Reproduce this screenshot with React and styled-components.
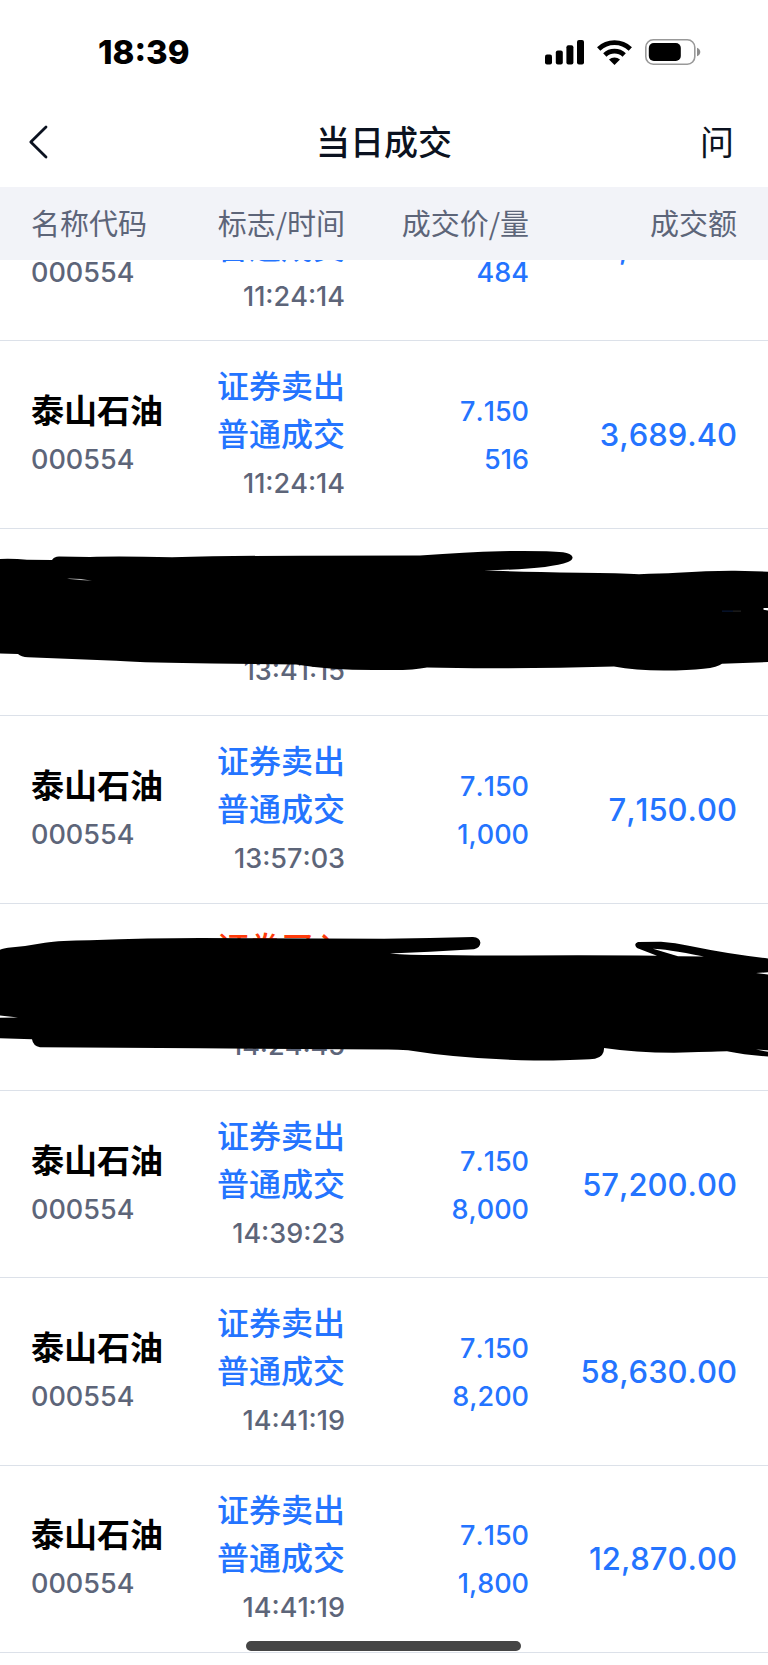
import React from 'react';
import styled, { createGlobalStyle } from 'styled-components';

const GlobalStyle = createGlobalStyle`
  *, *::before, *::after { box-sizing: border-box; }
  html, body { margin: 0; padding: 0; background: #fff; }
  body {
    font-family: Inter, "Noto Sans CJK SC", sans-serif;
    color: #000;
  }
`;

const Page = styled.div`
  min-height: 100vh;
  display: flex;
  flex-direction: column;
  padding-bottom: 12px;
`;

const Top = styled.header`
  position: relative;
  z-index: 2;
  background: #fff;
`;

const StatusBar = styled.div`
  height: 96px;
  padding: 8px 67px 0 98px;
  display: flex;
  align-items: center;
  justify-content: space-between;
`;

const Clock = styled.time`
  font-size: 33px;
  line-height: 40px;
  font-weight: 800;
`;

const StatusIcons = styled.div`
  display: flex;
  align-items: center;
  gap: 13px;
  svg { display: block; }
`;

const NavBar = styled.nav`
  height: 91px;
  padding: 2px 34px 0 24px;
  display: grid;
  grid-template-columns: 1fr auto 1fr;
  align-items: center;
  color: #0b1220;
`;

const Title = styled.h1`
  margin: 0;
  padding-left: 10px;
  font-size: 34px;
  line-height: 48px;
  font-weight: 500;
`;

const NavButton = styled.button`
  border: 0;
  padding: 0;
  background: none;
  color: inherit;
  font-family: inherit;
  font-size: 34px;
  line-height: 48px;
  display: flex;
  justify-self: ${(p) => (p.$end ? 'end' : 'start')};
`;

const Table = styled.table`
  flex: 1;
  display: flex;
  flex-direction: column;
`;

const TableHead = styled.thead`
  position: relative;
  z-index: 1;
  display: block;
  background: #f2f3f8;
  color: #5d6579;
`;

const columns = `
  display: grid;
  grid-template-columns: 157fr 157fr 184fr 208fr;
  align-items: center;
`;

const HeadRow = styled.tr`
  ${columns}
  height: 73px;
  padding: 0 31px 4px;
`;

const HeadCell = styled.th`
  padding: 0;
  font-family: "Noto Sans CJK SC", sans-serif;
  font-size: 29px;
  line-height: 40px;
  font-weight: 400;
  white-space: nowrap;
  text-align: ${(p) => (p.$left ? 'left' : 'right')};
`;

/* The list is scrolled: its first record is partly under the header. */
const TableBody = styled.tbody`
  flex: 1;
  display: grid;
  grid-auto-rows: 1fr;
  margin-top: -106px;
`;

const Row = styled.tr`
  ${columns}
  position: relative;
  min-height: 187px;
  padding: 1px 31px 0;
  border-bottom: 1px solid #dce1e9;
`;

const Cell = styled.td`
  padding: 0;
  text-align: ${(p) => (p.$left ? 'left' : 'right')};
`;

const Line = styled.span`
  display: block;
  height: 48px;
  line-height: 48px;
  white-space: nowrap;
`;

const Name = styled(Line)`
  font-size: 33px;
  font-weight: 700;
`;

const Flag = styled(Line)`
  font-size: 32px;
  font-weight: 500;
  color: ${(p) => (p.$buy ? '#ff3b0a' : '#2474ff')};
`;

const Figure = styled(Line)`
  font-size: 27px;
  line-height: 50px;
  font-weight: 500;
  font-kerning: none;
  color: ${(p) => (p.$blue ? '#2474ff' : '#5d6579')};
`;

const Amount = styled(Line)`
  font-size: 31px;
  font-weight: 500;
  font-kerning: none;
  color: #2474ff;
`;

const Scribble = styled.svg`
  position: absolute;
  inset: 0;
  width: 100%;
  height: 100%;
`;

const HomeIndicator = styled.div`
  position: fixed;
  z-index: 3;
  bottom: 14px;
  left: 50%;
  width: 275px;
  height: 10px;
  margin-left: -138px;
  border-radius: 5px;
  background: #454545;
`;

const Signal = () => (
  <svg width="39" height="25" viewBox="0 0 39 25" aria-hidden="true">
    <rect x="0" y="14.5" width="7" height="10" rx="2" />
    <rect x="10.8" y="10.5" width="7" height="14" rx="2" />
    <rect x="21.4" y="5.2" width="7" height="19.3" rx="2" />
    <rect x="32" y="0" width="7" height="24.5" rx="2" />
  </svg>
);

const Wifi = () => (
  <svg width="35" height="25" viewBox="0 0 35 25" aria-hidden="true">
    <g fill="none" stroke="#000" strokeWidth="4.8">
      <path d="M1.7 8.9 A23 23 0 0 1 33.3 8.9" />
      <path d="M7.8 15 A14.2 14.2 0 0 1 27.2 15" />
    </g>
    <path d="M17.5 25 L12 19.6 A8 8 0 0 1 23 19.6 Z" />
  </svg>
);

const Battery = () => (
  <svg width="56" height="26" viewBox="0 0 56 26" aria-hidden="true">
    <rect x="0.8" y="0.8" width="49" height="24.4" rx="7.5" fill="none" stroke="#999" strokeWidth="1.6" />
    <rect x="3.8" y="4" width="32" height="18" rx="5" />
    <path d="M52 8.8 C56.4 10.2 56.4 15.8 52 17.2 Z" fill="#8c8c8c" />
  </svg>
);

const Back = () => (
  <svg width="30" height="40" viewBox="0 0 30 40" aria-hidden="true">
    <path d="M22 4 L6.8 19 L22 34" fill="none" stroke="currentColor" strokeWidth="2.8" strokeLinecap="round" strokeLinejoin="round" />
  </svg>
);

const FirstScribble = () => (
  <Scribble viewBox="0 0 768 187" preserveAspectRatio="none" aria-hidden="true">
    <path d="M0 30 Q14 29.5 27 30.8 L52 31.2 Q54 27.5 59 27.5 L90 28 Q120 27.2 172 28.3 Q230 26.8 300 26.8 L420 26.6 Q467 23.2 500 22.3 Q545 21.6 563 23.4 Q571 24.5 572.5 28 Q573 31 568 33 Q548 40.4 484 41.5 Q520 43.2 580 43.8 Q620 44 639 45.3 Q660 44.8 677 44 Q710 41.6 735 41.8 L768 42.8 V79.3 H763.5 V81 L768 81.8 V133.5 L722 135.2 Q714 142 664 142 Q635 141.8 614 138 L560 139.2 Q480 140.5 427 139 Q413 142 384 141.5 Q335 142.3 296 136 L212 135 Q150 134.5 116 132.3 L28 128.7 Q21 128 18 125.3 L0 124.8 Z" />
    <path d="M67 49.8 Q80 49.5 92 51.8 Q80 51.5 67 49.8" fill="#b5b5b5" />
    <path d="M722 82.4 H733" stroke="#0a1c40" strokeWidth="1" />
    <path d="M733 82.4 H741" stroke="#2a2a2a" strokeWidth="1" />
  </Scribble>
);

const SecondScribble = () => (
  <Scribble viewBox="0 0 768 187" preserveAspectRatio="none" aria-hidden="true">
    <path fillRule="evenodd" d="M0 46 Q2 44.8 8 44 Q28 42 45 38.8 Q60 36.5 90 36.3 Q150 34.4 200 34.2 L384 34.8 L430 34.2 L473 33 Q480 33.5 480.4 39 Q480 44.5 474 45.3 L430 48 L390 49.7 Q400 51.3 440 51.1 Q480 51.8 520 51.7 Q600 51.2 657 52 L637 44.2 Q633 40 638 38.2 L661 38 Q675 39 690 42.2 Q730 50.5 768 54.6 V68.5 L756 69.3 L768 70.7 V146.8 L756 146 L768 148.3 V153 Q745 151.5 727 147.8 Q710 148.2 674 149.3 Q635 149 604 144.4 Q604.5 153.5 595 155.2 Q575 157 534 157 Q465 156 408 146.8 Q396 145.8 384 146 L200 144.8 L40 143.8 Q33 142.5 32 135.8 L0 134.6 V114.2 L18 113.9 L0 111.8 Z M653 44.8 Q663 44.6 704 52.6 L678 52.3 Z" />
  </Scribble>
);

const scribbles = { first: FirstScribble, second: SecondScribble };

const trades = [
  { time: '11:24:14', count: '484', amount: '3,460.60' },
  { name: '泰山石油', time: '11:24:14', flag: '证券卖出', price: '7.150', count: '516', amount: '3,689.40' },
  { time: '13:41:15', hidden: 'first' },
  { name: '泰山石油', time: '13:57:03', flag: '证券卖出', price: '7.150', count: '1,000', amount: '7,150.00' },
  { time: '14:24:45', hidden: 'second', flag: '证券买入', buy: true },
  { name: '泰山石油', time: '14:39:23', flag: '证券卖出', price: '7.150', count: '8,000', amount: '57,200.00' },
  { name: '泰山石油', time: '14:41:19', flag: '证券卖出', price: '7.150', count: '8,200', amount: '58,630.00' },
  { name: '泰山石油', time: '14:41:19', flag: '证券卖出', price: '7.150', count: '1,800', amount: '12,870.00' },
];

function Trade({ name, time, price, count, amount, hidden, flag, buy }) {
  const Cover = scribbles[hidden];
  return (
    <Row>
      <Cell $left>
        <Name>{name}</Name>
        <Figure>{!hidden && '000554'}</Figure>
      </Cell>
      <Cell>
        <Flag $buy={buy}>{flag}</Flag>
        <Flag>{!hidden && '普通成交'}</Flag>
        <Figure>{time}</Figure>
      </Cell>
      <Cell>
        <Figure $blue>{price}</Figure>
        <Figure $blue>{count}</Figure>
      </Cell>
      <Cell>
        <Amount>{amount}</Amount>
        {Cover && <Cover />}
      </Cell>
    </Row>
  );
}

export default function App() {
  return (
    <>
      <GlobalStyle />
      <Page lang="zh-CN">
        <Top>
          <StatusBar>
            <Clock>18:39</Clock>
            <StatusIcons>
              <Signal />
              <Wifi />
              <Battery />
            </StatusIcons>
          </StatusBar>
          <NavBar>
            <NavButton aria-label="返回"><Back /></NavButton>
            <Title>当日成交</Title>
            <NavButton $end>问</NavButton>
          </NavBar>
        </Top>
        <Table>
          <TableHead>
            <HeadRow>
              <HeadCell $left>名称代码</HeadCell>
              <HeadCell>标志/时间</HeadCell>
              <HeadCell>成交价/量</HeadCell>
              <HeadCell>成交额</HeadCell>
            </HeadRow>
          </TableHead>
          <TableBody>
            {trades.map((trade, i) => (
              <Trade key={i} {...trade} />
            ))}
          </TableBody>
        </Table>
        <HomeIndicator />
      </Page>
    </>
  );
}
